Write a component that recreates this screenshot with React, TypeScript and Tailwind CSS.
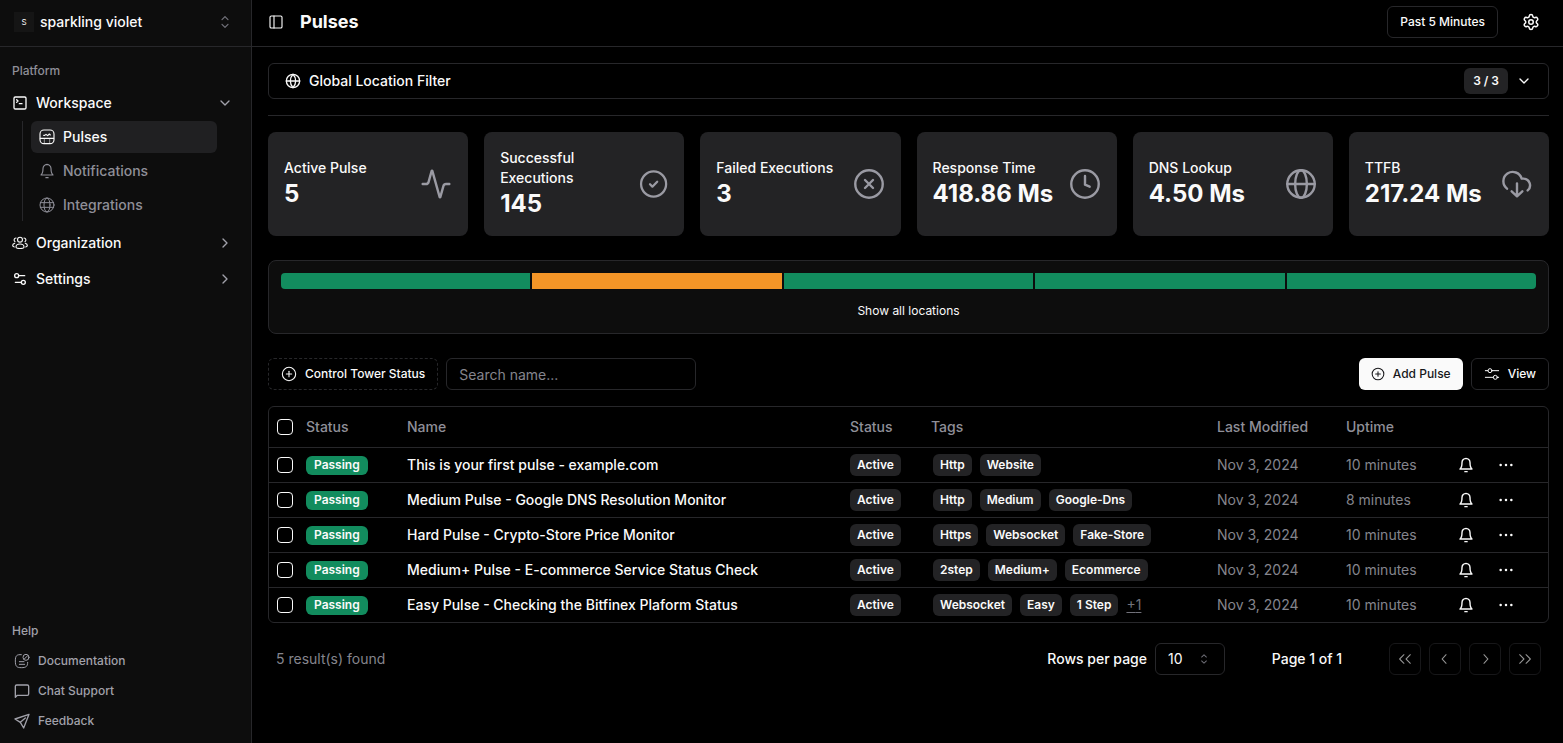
import { useState } from "react"
import type { ReactNode } from "react"
import {
    Activity,
    ChevronDown,
    ChevronRight,
    CirclePlus,
    Globe,
    PanelLeft,
    Settings,
    Settings2,
    SquareTerminal,
} from "lucide-react"
import {
    RxCaretSort,
    RxChevronLeft,
    RxChevronRight,
    RxDoubleArrowLeft,
    RxDoubleArrowRight,
} from "react-icons/rx"

type IconProps = { className?: string; strokeWidth?: number; children?: ReactNode }

function Icon({ className, strokeWidth = 1.5, children }: IconProps) {
    return (
        <svg
            viewBox="0 0 24 24"
            fill="none"
            stroke="currentColor"
            strokeWidth={strokeWidth}
            strokeLinecap="round"
            strokeLinejoin="round"
            className={className}
            aria-hidden="true"
        >
            {children}
        </svg>
    )
}

const PulseIcon = ({ className }: IconProps) => (
    <Icon className={className} strokeWidth={1.7}>
        <rect x="1.500" y="1.500" width="21" height="20.500" rx="6" />
        <path d="M2 14h20M7 9.500h1.500L10.500 8l2.500 2 2.500-2.500 1.500 1.500" />
        <path d="M8 14.500v7M16 14.500v7" strokeWidth={0.8} />
    </Icon>
)

const WorldIcon = ({ className }: IconProps) => (
    <Icon className={className}>
        <circle cx="12" cy="12" r="10.500" />
        <ellipse cx="12" cy="12" rx="4.500" ry="10.500" />
        <path d="M2 8.500h20M2 15.500h20" />
    </Icon>
)

const TeamIcon = ({ className }: IconProps) => (
    <Icon className={className} strokeWidth={1.7}>
        <circle cx="12" cy="7" r="3.700" />
        <path d="M18 4.500a3 3 0 0 1 1.500 5.500M6 4.500a3 3 0 0 0-1.500 5.500" />
        <path d="M6 18c0-3 2.500-4.500 6-4.500s6 1.500 6 4.500-12 3-12 0Z" />
        <path d="M20 12.500c1.500.5 3 1.500 3 3.200s-1 2-2.500 2.300M4 12.500c-1.500.5-3 1.500-3 3.200s1 2 2.500 2.300" />
    </Icon>
)

const DocsIcon = ({ className }: IconProps) => (
    <Icon className={className}>
        <path d="M11 2.500C4 2 2 4 2 12s2 10 9 10 9.500-1.500 9.500-8" />
        <circle cx="18" cy="6.500" r="4.500" />
        <path d="m15.500 9 5-5M8 13h7M8 17h8" />
    </Icon>
)

const ChatIcon = ({ className }: IconProps) => (
    <Icon className={className} strokeWidth={2}>
        <path d="M2 21.500V5a2 2 0 0 1 2-2h16a2 2 0 0 1 2 2v11.500a2 2 0 0 1-2 2H5L2 21.500Z" />
    </Icon>
)

const SendIcon = ({ className }: IconProps) => (
    <Icon className={className} strokeWidth={2}>
        <path d="M22.500 2 1.500 9l8 5 5 8.500L22.500 2ZM9.500 14 17 7.500" />
    </Icon>
)

const BellIcon = ({ className, strokeWidth = 1.7 }: IconProps) => (
    <Icon className={className} strokeWidth={strokeWidth}>
        <path d="M18 8.400c0-1.700-.6-3.300-1.800-4.500A6 6 0 0 0 12 2a6 6 0 0 0-4.200 1.900A6.400 6.400 0 0 0 6 8.400C6 15.900 3 18 3 18h18s-3-2.100-3-9.600ZM10.300 22h3.400" />
    </Icon>
)

const DotsIcon = ({ className }: IconProps) => (
    <Icon className={className} strokeWidth={3.8}>
        <path d="M4 12h.01M12 12h.01M20 12h.01" />
    </Icon>
)

const SlidersIcon = ({ className }: IconProps) => (
    <Icon className={className}>
        <path d="M2 7h4M12 7h10M2 17h12M20 17h2" />
        <circle cx="9" cy="7" r="3" />
        <circle cx="17" cy="17" r="3" />
    </Icon>
)

const CheckCircleIcon = ({ className }: IconProps) => (
    <Icon className={className} strokeWidth={1.7}>
        <circle cx="13.200" cy="12" r="9.400" />
        <path d="m10.500 12.200 1.800 1.800 3.600-3.700" />
    </Icon>
)

const XCircleIcon = ({ className }: IconProps) => (
    <Icon className={className} strokeWidth={1.8}>
        <circle cx="12" cy="12" r="10.300" />
        <path d="m9 9 6 6M15 9l-6 6" />
    </Icon>
)

const ClockIcon = ({ className }: IconProps) => (
    <Icon className={className} strokeWidth={1.8}>
        <circle cx="12" cy="12" r="10.300" />
        <path d="M12 6v6.500l3.500 1.500" />
    </Icon>
)

const GlobeIcon = ({ className }: IconProps) => (
    <Icon className={className} strokeWidth={1.8}>
        <circle cx="12" cy="12" r="10.300" />
        <ellipse cx="12" cy="12" rx="4.400" ry="10.300" />
        <path d="M1.700 12h20.600" />
    </Icon>
)

const CloudIcon = ({ className }: IconProps) => (
    <Icon className={className} strokeWidth={1.8}>
        <path d="M4.500 15.500A7 7 0 1 1 15.500 8h1.500a5 5 0 0 1 3 8.800M12 11.500V21M8 17.500l4 3.700 4-3.700" />
    </Icon>
)

const stats = [
    { label: "Active Pulse", value: "5", icon: Activity },
    { label: "Successful Executions", value: "145", icon: CheckCircleIcon },
    { label: "Failed Executions", value: "3", icon: XCircleIcon },
    { label: "Response Time", value: "418.86 Ms", icon: ClockIcon },
    { label: "DNS Lookup", value: "4.50 Ms", icon: GlobeIcon },
    { label: "TTFB", value: "217.24 Ms", icon: CloudIcon },
]

const pulses = [
    { name: "This is your first pulse - example.com", tags: ["Http", "Website"], more: 0, uptime: "10 minutes" },
    { name: "Medium Pulse - Google DNS Resolution Monitor", tags: ["Http", "Medium", "Google-Dns"], more: 0, uptime: "8 minutes" },
    { name: "Hard Pulse - Crypto-Store Price Monitor", tags: ["Https", "Websocket", "Fake-Store"], more: 0, uptime: "10 minutes" },
    { name: "Medium+ Pulse - E-commerce Service Status Check", tags: ["2step", "Medium+", "Ecommerce"], more: 0, uptime: "10 minutes" },
    { name: "Easy Pulse - Checking the Bitfinex Plaform Status", tags: ["Websocket", "Easy", "1 Step"], more: 1, uptime: "10 minutes" },
]

function Sidebar() {
    return (
        <aside className="flex w-[252px] shrink-0 flex-col border-r border-[#27272a] bg-[#0d0d0d]">
            <button className="flex h-[47px] items-center border-b border-[#27272a] pr-[18px] pb-0.5 pl-3.5 text-left">
                <span className="flex size-5 items-center justify-center bg-[#151515] text-[8px]">S</span>
                <span className="ml-1.5 flex-1 text-sm font-medium">sparkling violet</span>
                <RxCaretSort className="size-4 scale-125 text-[#71717a]" />
            </button>

            <nav className="flex flex-1 flex-col p-2">
                <h2 className="flex h-8 items-center px-1 text-xs font-medium text-[#8f8f98]">Platform</h2>
                <div className="flex flex-col gap-1 text-sm font-medium">
                    <div>
                        <button className="flex h-8 w-full items-center gap-2 pr-2.5 pl-1">
                            <SquareTerminal className="size-4" />
                            Workspace
                            <ChevronDown className="ml-auto size-4 text-[#a1a1aa]" />
                        </button>
                        <ul className="my-0.5 mr-[26px] ml-3.5 flex flex-col gap-0.5 border-l border-[#27272a] pl-2 text-[#8f8f98]">
                            <li>
                                <a href="#pulses" className="flex h-8 items-center gap-2 rounded-md bg-[#202022] px-2 text-[#fafafa]">
                                    <PulseIcon className="size-4" />
                                    Pulses
                                </a>
                            </li>
                            <li>
                                <a href="#notifications" className="flex h-8 items-center gap-2 px-2">
                                    <BellIcon className="size-4" />
                                    Notifications
                                </a>
                            </li>
                            <li>
                                <a href="#integrations" className="flex h-8 items-center gap-2 px-2">
                                    <WorldIcon className="size-4" />
                                    Integrations
                                </a>
                            </li>
                        </ul>
                    </div>
                    <button className="flex h-8 items-center gap-2 pr-2.5 pl-1">
                        <TeamIcon className="size-4" />
                        Organization
                        <ChevronRight className="ml-auto size-4 text-[#a1a1aa]" />
                    </button>
                    <button className="flex h-8 items-center gap-2 pr-2.5 pl-1">
                        <Settings2 className="size-4" />
                        Settings
                        <ChevronRight className="ml-auto size-4 text-[#a1a1aa]" />
                    </button>
                </div>

                <div className="mt-auto flex flex-col gap-0.5 text-xs font-medium text-[#a1a1aa]">
                    <h2 className="-mb-0.5 flex h-8 items-center px-1">Help</h2>
                    <a href="#docs" className="flex h-7 items-center gap-2 px-1.5">
                        <DocsIcon className="size-4" />
                        Documentation
                    </a>
                    <a href="#chat" className="flex h-7 items-center gap-2 px-1.5">
                        <ChatIcon className="size-4" />
                        Chat Support
                    </a>
                    <a href="#feedback" className="flex h-7 items-center gap-2 px-1.5">
                        <SendIcon className="size-4" />
                        Feedback
                    </a>
                </div>
            </nav>
        </aside>
    )
}

function Header() {
    return (
        <header className="flex h-[47px] items-center border-b border-[#27272a] pr-[23px] pb-0.5 pl-4">
            <button title="Toggle sidebar">
                <PanelLeft className="size-4" strokeWidth={1.7} />
            </button>
            <h1 className="ml-4 flex-1 text-lg font-bold">Pulses</h1>
            <button className="h-8 rounded-md border border-[#27272a] px-3 text-xs font-medium">Past 5 Minutes</button>
            <button title="Settings" className="ml-6">
                <Settings className="size-[18px]" />
            </button>
        </header>
    )
}

function StatCards() {
    return (
        <section className="grid grid-cols-6 gap-4">
            {stats.map(({ label, value, icon: StatIcon }) => (
                <div key={label} className="flex h-[104px] items-center justify-between rounded-lg bg-[#232325] px-4">
                    <div>
                        <p className="text-sm font-medium">{label}</p>
                        <p className="text-2xl font-bold">{value}</p>
                    </div>
                    <StatIcon className="size-8 shrink-0 text-[#9a9aa3]" strokeWidth={1.8} />
                </div>
            ))}
        </section>
    )
}

function LocationStatus() {
    return (
        <section className="mt-6 flex h-[74px] flex-col rounded-lg border border-[#27272a] bg-[#0d0d0d] p-3">
            <div className="flex h-4 shrink-0 gap-0.5 overflow-hidden rounded">
                <div className="flex-1 bg-[#128c5e]" />
                <div className="flex-1 bg-[#f49527]" />
                <div className="flex-1 bg-[#128c5e]" />
                <div className="flex-1 bg-[#128c5e]" />
                <div className="flex-1 bg-[#128c5e]" />
            </div>
            <button className="mx-auto mt-3.5 text-xs">Show all locations</button>
        </section>
    )
}

function Toolbar() {
    const [search, setSearch] = useState("")

    return (
        <div className="mt-6 flex items-center gap-2">
            <button className="flex h-8 items-center gap-2 rounded-md border border-dashed border-[#27272a] px-3 text-xs font-medium">
                <CirclePlus className="size-4" strokeWidth={1.6} />
                Control Tower Status
            </button>
            <input
                type="text"
                aria-label="Search name"
                placeholder="Search name..."
                value={search}
                onChange={(e) => setSearch(e.target.value)}
                className="h-8 w-[250px] rounded-md border border-[#27272a] bg-transparent px-3 text-sm placeholder:text-[#85858d]"
            />
            <button className="ml-auto flex h-8 items-center gap-2 rounded-md bg-[#fafafa] px-3 text-xs font-medium text-[#18181b]">
                <CirclePlus className="size-3.5" strokeWidth={1.8} />
                Add Pulse
            </button>
            <button className="flex h-8 items-center gap-2 rounded-md border border-[#27272a] px-3 text-xs font-medium">
                <SlidersIcon className="size-4" />
                View
            </button>
        </div>
    )
}

function Checkbox({ label }: { label: string }) {
    return (
        <input
            type="checkbox"
            aria-label={label}
            className="block size-4 appearance-none rounded border border-[#fafafa] checked:bg-[#fafafa]"
        />
    )
}

function Tag({ children }: { children: ReactNode }) {
    return <span className="flex h-[22px] items-center rounded-md bg-[#232325] px-[7px] text-xs font-semibold">{children}</span>
}

function PulseTable() {
    return (
        <div className="mt-4 rounded-md border border-[#27272a]">
            <table className="w-full table-fixed text-left text-sm">
                <colgroup>
                    <col className="w-[29px]" />
                    <col className="w-[101px]" />
                    <col />
                    <col className="w-[81px]" />
                    <col className="w-[286px]" />
                    <col className="w-[129px]" />
                    <col className="w-[111px]" />
                    <col className="w-[99px]" />
                </colgroup>
                <thead>
                    <tr className="h-10 border-b border-[#27272a] text-[#8f8f98]">
                        <th className="pl-2"><Checkbox label="Select all" /></th>
                        <th className="px-2 font-medium">Status</th>
                        <th className="px-2 font-medium">Name</th>
                        <th className="px-2 font-medium">Status</th>
                        <th className="px-2 font-medium">Tags</th>
                        <th className="px-2 font-medium">Last Modified</th>
                        <th className="px-2 font-medium">Uptime</th>
                        <th aria-label="Actions" />
                    </tr>
                </thead>
                <tbody>
                    {pulses.map((pulse) => (
                        <tr key={pulse.name} className="h-[35px] border-b border-[#27272a] last:border-b-0">
                            <td className="pl-2"><Checkbox label={`Select ${pulse.name}`} /></td>
                            <td className="px-2">
                                <span className="mt-px flex h-[19px] w-fit items-center rounded-md bg-[#128c5e] px-2 text-xs font-semibold">Passing</span>
                            </td>
                            <td className="truncate px-2 font-medium">{pulse.name}</td>
                            <td className="px-2"><div className="flex"><Tag>Active</Tag></div></td>
                            <td className="pr-2 pl-2.5">
                                <div className="flex items-center gap-2">
                                    {pulse.tags.map((tag) => <Tag key={tag}>{tag}</Tag>)}
                                    {pulse.more > 0 && <a href="#tags" className="text-[#71717a] underline underline-offset-2">+{pulse.more}</a>}
                                </div>
                            </td>
                            <td className="px-2 text-[#85858d]">Nov 3, 2024</td>
                            <td className="px-2 text-[#85858d]">{pulse.uptime}</td>
                            <td>
                                <div className="flex items-center gap-6 pl-[9px]">
                                    <button title="Notifications"><BellIcon className="size-4" strokeWidth={2.1} /></button>
                                    <button title="Open menu"><DotsIcon className="size-4" /></button>
                                </div>
                            </td>
                        </tr>
                    ))}
                </tbody>
            </table>
        </div>
    )
}

function Pagination() {
    const pageButton = "flex size-8 items-center justify-center rounded-md border border-[#27272a] opacity-60"

    return (
        <footer className="mt-5 flex items-center px-2 text-sm font-medium">
            <p className="flex-1 font-normal text-[#85858d]">5 result(s) found</p>
            <label htmlFor="rows">Rows per page</label>
            <div className="relative ml-2">
                <select id="rows" defaultValue="10" className="h-8 w-[70px] appearance-none rounded-md border border-[#27272a] bg-black px-3 font-normal">
                    <option>10</option>
                    <option>20</option>
                    <option>50</option>
                </select>
                <RxCaretSort className="pointer-events-none absolute top-2 right-[13px] size-4 text-[#71717a]" />
            </div>
            <p className="ml-8 w-[100px] text-center">Page 1 of 1</p>
            <div className="ml-8 flex gap-2">
                <button disabled title="First page" className={pageButton}><RxDoubleArrowLeft className="size-4" /></button>
                <button disabled title="Previous page" className={pageButton}><RxChevronLeft className="size-4" /></button>
                <button disabled title="Next page" className={pageButton}><RxChevronRight className="size-4" /></button>
                <button disabled title="Last page" className={pageButton}><RxDoubleArrowRight className="size-4" /></button>
            </div>
        </footer>
    )
}

export default function App() {
    return (
        <div className="flex min-h-screen bg-black font-['Inter',sans-serif] text-[#fafafa]">
            <Sidebar />
            <div className="min-w-0 flex-1">
                <Header />
                <main className="py-4 pr-3.5 pl-4">
                    <button className="flex h-9 w-full items-center rounded-md border border-[#27272a] px-4 text-sm font-medium">
                        <Globe className="size-4" />
                        <span className="ml-2">Global Location Filter</span>
                        <span className="ml-auto flex h-[26px] items-center rounded-md bg-[#232325] px-[9px] text-xs font-semibold">3 / 3</span>
                        <ChevronDown className="ml-2 size-4" />
                    </button>
                    <hr className="my-4 border-[#27272a]" />
                    <StatCards />
                    <LocationStatus />
                    <Toolbar />
                    <PulseTable />
                    <Pagination />
                </main>
            </div>
        </div>
    )
}
